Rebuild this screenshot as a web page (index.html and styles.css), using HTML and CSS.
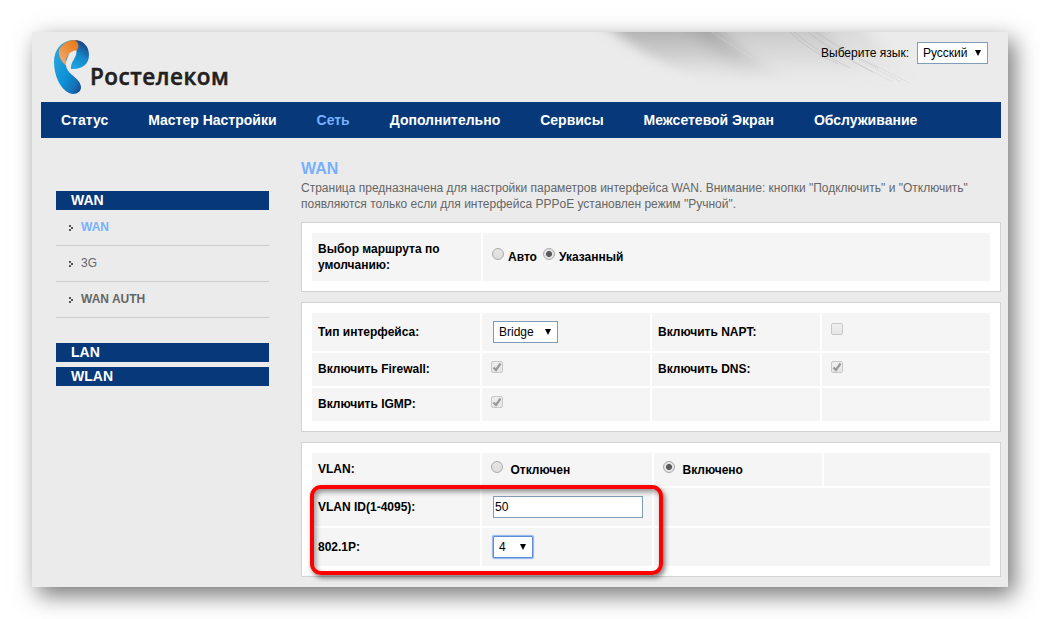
FILE: index.html
```
<!DOCTYPE html>
<html lang="ru">
<head>
    <meta charset="UTF-8">
    <meta name="viewport" content="width=device-width, initial-scale=1.0">
    <title>Ростелеком - WAN</title>
    <link rel="stylesheet" href="styles.css">
</head>
<body>
    <div class="window">
        <header class="header">
            <svg class="swoosh" width="440" height="70" viewBox="0 0 440 70">
                <defs>
                    <linearGradient id="fade" x1="0" y1="0" x2="0" y2="1">
                        <stop offset="0" stop-color="#858585" stop-opacity=".65"/>
                        <stop offset=".5" stop-color="#a0a0a0" stop-opacity=".35"/>
                        <stop offset="1" stop-color="#ebebeb" stop-opacity="0"/>
                    </linearGradient>
                    <filter id="soft" x="-20%" y="-50%" width="140%" height="200%"><feGaussianBlur stdDeviation="9 3"/></filter>
                </defs>
                <g filter="url(#soft)">
                    <path d="M38 -8 Q75 30 160 58 L240 58 Q180 30 145 -8Z" fill="url(#fade)"/>
                    <path d="M120 -8 L180 58 L310 58 L250 -8Z" fill="url(#fade)" opacity=".6"/>
                    <path d="M240 -8 L310 56 L360 60 L290 -8Z" fill="url(#fade)" opacity=".3"/>
                </g>
                <g stroke="#aaa" stroke-width=".6" stroke-opacity=".6" fill="none">
                    <path d="M222 0 Q240 18 270 32M226 0 Q246 18 282 36M240 0 Q262 18 305 40M248 0 Q270 16 310 36"/>
                    <path d="M285 30 L325 50M291 28 L333 50M297 28 L341 51" stroke-dasharray="1 1"/>
                    <path d="M144 0 Q158 10 184 26" stroke="#fff" opacity=".5"/>
                </g>
            </svg>
            <div class="logo">
                <svg width="36" height="56" viewBox="0 0 36 56">
                    <defs>
                        <linearGradient id="blue" x1="0" y1="0" x2="1" y2="1">
                            <stop offset="0" stop-color="#35a9de"/>
                            <stop offset=".55" stop-color="#0d93d8"/>
                            <stop offset=".8" stop-color="#1672b8"/>
                            <stop offset="1" stop-color="#1c3f86"/>
                        </linearGradient>
                        <linearGradient id="cap" x1=".2" y1="1" x2=".6" y2="0">
                            <stop offset="0" stop-color="#1ea6e2"/>
                            <stop offset=".5" stop-color="#1687cb"/>
                            <stop offset="1" stop-color="#1c3f80"/>
                        </linearGradient>
                        <linearGradient id="orange" x1="0" y1="1" x2="1" y2="0">
                            <stop offset="0" stop-color="#f0b27c"/>
                            <stop offset=".6" stop-color="#ec8a35"/>
                            <stop offset="1" stop-color="#e4761c"/>
                        </linearGradient>
                    </defs>
                    <path d="M20 1C7 1.500 0 11 0 23C0 36 6 50 15 54C21 56.500 27 53.500 27 48.500C27 42 20 38 16 34C12.500 30.500 11.500 27 12 23Z" fill="url(#blue)"/>
                    <path d="M20 1C29 1 35 7 35 16C35 25 28 31 17 30C16 23 23 19 22.500 11.500Z" fill="url(#cap)"/>
                    <path d="M5 11C8 5 14 1 21 1C25 4 25.500 8 22.700 11.300C15 12 11 18 12.200 27C7 22 4 17 5 11Z" fill="url(#orange)"/>
                </svg>
                <span class="logo-text">Ростелеком</span>
            </div>
            <div class="language">
                <span class="language-label">Выберите язык:</span>
                <span class="select select-lang">Русский<i class="arrow"></i></span>
            </div>
        </header>

        <nav class="nav">
            <a>Статус</a>
            <a>Мастер Настройки</a>
            <a class="active">Сеть</a>
            <a>Дополнительно</a>
            <a>Сервисы</a>
            <a>Межсетевой Экран</a>
            <a>Обслуживание</a>
        </nav>

        <div class="main">
            <aside class="sidebar">
                <h3>WAN</h3>
                <ul>
                    <li class="active"><svg class="bullet" width="4" height="6"><path d="M0 0h2v2H0zM2 2h2v2H2zM0 4h2v2H0z"/></svg>WAN</li>
                    <li class="plain"><svg class="bullet" width="4" height="6"><path d="M0 0h2v2H0zM2 2h2v2H2zM0 4h2v2H0z"/></svg>3G</li>
                    <li><svg class="bullet" width="4" height="6"><path d="M0 0h2v2H0zM2 2h2v2H2zM0 4h2v2H0z"/></svg>WAN AUTH</li>
                </ul>
                <h3>LAN</h3>
                <h3>WLAN</h3>
            </aside>

            <main class="content">
                <h1>WAN</h1>
                <p class="intro">Страница предназначена для настройки параметров интерфейса WAN. Внимание: кнопки "Подключить" и "Отключить"<br>появляются только если для интерфейса PPPoE установлен режим "Ручной".</p>

                <section class="panel route">
                    <div class="cell label"><span>Выбор маршрута по<br>умолчанию:</span></div>
                    <div class="cell field">
                        <i class="radio"></i><span>Авто</span>
                        <i class="radio checked"></i><span>Указанный</span>
                    </div>
                </section>

                <section class="panel options">
                    <div class="cell label"><span>Тип интерфейса:</span></div>
                    <div class="cell field"><span class="select select-type">Bridge<i class="arrow"></i></span></div>
                    <div class="cell label"><span>Включить NAPT:</span></div>
                    <div class="cell field"><i class="check"></i></div>

                    <div class="cell label short"><span>Включить Firewall:</span></div>
                    <div class="cell field"><i class="check"><svg width="10" height="10"><path d="M1.5 5.5 4 8 8.500 1.500"/></svg></i></div>
                    <div class="cell label short"><span>Включить DNS:</span></div>
                    <div class="cell field"><i class="check"><svg width="10" height="10"><path d="M1.5 5.5 4 8 8.500 1.500"/></svg></i></div>

                    <div class="cell label short"><span>Включить IGMP:</span></div>
                    <div class="cell field"><i class="check"><svg width="10" height="10"><path d="M1.5 5.5 4 8 8.500 1.500"/></svg></i></div>
                    <div class="cell"></div>
                    <div class="cell"></div>
                </section>

                <section class="panel vlan">
                    <div class="cell label short"><span>VLAN:</span></div>
                    <div class="cell field"><i class="radio"></i><span>Отключен</span></div>
                    <div class="cell field"><i class="radio checked"></i><span>Включено</span></div>
                    <div class="cell"></div>

                    <div class="cell label"><span>VLAN ID(1-4095):</span></div>
                    <div class="cell field"><input class="vlan-id" type="text" value="50"></div>
                    <div class="cell wide"></div>

                    <div class="cell label"><span>802.1P:</span></div>
                    <div class="cell field"><span class="select select-prio">4<i class="arrow"></i></span></div>
                    <div class="cell wide"></div>

                    <div class="highlight"></div>
                </section>
            </main>
        </div>
    </div>
</body>
</html>
```
FILE: styles.css
```
* {
    margin: 0;
    padding: 0;
    box-sizing: border-box;
}

body {
    font-family: "Liberation Sans", Arial, sans-serif;
    font-size: 12px;
    line-height: 16px;
    background: #fff;
    color: #000;
    padding: 32px;
    overflow: hidden;
}

.window {
    width: 976px;
    height: 555px;
    background: #ebebeb;
    box-shadow: 6px 8px 22px rgba(0, 0, 0, 0.55);
}

/* header */
.header {
    position: relative;
    display: flex;
    justify-content: space-between;
    height: 70px;
    padding: 7px 20px 0 22px;
}

.swoosh {
    position: absolute;
    top: 0;
    right: 0;
}

.logo {
    display: flex;
}

.logo-text {
    font-family: "Open Sans", sans-serif;
    font-size: 22.5px;
    font-weight: 600;
    letter-spacing: 0.5px;
    line-height: 30px;
    margin-top: 23px;
    color: #231f20;
    -webkit-text-stroke: 0.5px #231f20;
}

.language {
    position: relative;
    display: flex;
    height: 22px;
    margin-top: 3px;
    line-height: 22px;
}

.language-label {
    margin-right: 8px;
}

.select {
    display: flex;
    justify-content: space-between;
    align-items: center;
    height: 22px;
    padding: 0 6px 0 5px;
    background: #fff;
    border: 1px solid #7f9db9;
}

.arrow {
    border: 3.5px solid transparent;
    border-top: 6px solid #000;
    border-bottom: 0;
}

.select-lang {
    width: 71px;
}

.select-type {
    width: 65px;
}

.select-prio {
    width: 40px;
    height: 22px;
    border-color: #5b8bd9;
    border-radius: 1px;
    box-shadow: 0 0 1px 1px #8fb5f0;
}

/* navigation */
.nav {
    display: flex;
    gap: 40px;
    height: 36px;
    margin: 0 7px 0 9px;
    padding-left: 20px;
    background: #06387a;
    color: #fff;
    font-size: 14px;
    font-weight: bold;
    line-height: 36px;
}

.nav .active {
    color: #78b0ff;
}

.main {
    display: flex;
    gap: 32px;
    padding: 0 7px 0 24px;
}

/* sidebar */
.sidebar {
    width: 213px;
    padding-top: 53px;
}

.sidebar h3 {
    height: 19px;
    margin-bottom: 5px;
    padding-left: 15px;
    background: #06387a;
    color: #fff;
    font-size: 14px;
    line-height: 19px;
}

.sidebar ul {
    list-style: none;
    margin: -5px 0 25px;
}

.sidebar li {
    display: flex;
    align-items: center;
    height: 36px;
    padding: 0 0 2px 13px;
    border-bottom: 1px solid #ccc;
    color: #666;
    font-weight: bold;
}

.sidebar li.active {
    color: #78b0ff;
}

.sidebar li.plain {
    font-weight: normal;
}

.bullet {
    margin: 2px 8px 0 0;
    fill: #555;
}

/* content */
.content {
    width: 700px;
    padding-top: 20px;
}

h1 {
    color: #78b0ff;
    font-size: 16px;
    line-height: 22px;
}

.intro {
    margin-bottom: 10px;
    color: #666;
}

.panel {
    position: relative;
    display: grid;
    gap: 2px;
    margin-bottom: 10px;
    padding: 10px;
    background: #fff;
    border: 1px solid #d3d3d3;
}

.route {
    grid-template-columns: 169px 507px;
    grid-template-rows: 48px;
}

.options {
    grid-template-columns: repeat(4, 168px);
    grid-template-rows: 38px 33px 33px;
}

.vlan {
    grid-template-columns: 168px 170px 168px 166px;
    grid-template-rows: 33px 38px 38px;
}

.wide {
    grid-column: span 2;
}

.cell {
    display: flex;
    align-items: center;
    background: #f5f5f5;
}

.label {
    padding-left: 6px;
    font-weight: bold;
}

.label.short {
    padding-bottom: 1px;
}

.field {
    padding-left: 9px;
    font-weight: bold;
}

.select,
.vlan-id {
    font-weight: normal;
}

.field .select,
.vlan-id {
    margin-left: 2px;
}

.vlan-id {
    width: 150px;
    height: 22px;
    padding: 0 1px;
    border: 1px solid #7f9db9;
    font: 12px "Liberation Sans", Arial, sans-serif;
}

.radio {
    flex: none;
    width: 12px;
    height: 12px;
    margin-bottom: 6px;
    border: 1px solid #aaa;
    border-radius: 50%;
    background: linear-gradient(#e6e6e6, #ddd);
}

.radio.checked {
    background: radial-gradient(circle, #5a5a5a 2.6px, #e4e4e4 3.4px);
}

.radio + span {
    margin: 0 6px 0 4px;
}

.vlan .radio {
    margin-bottom: 5px;
}

.vlan .radio + span {
    margin: 1px 0 0 7.5px;
}

.check {
    display: flex;
    width: 12px;
    height: 12px;
    margin-bottom: 6px;
    border: 1px solid #c8c8c8;
    border-radius: 2px;
    background: linear-gradient(#efefef, #e6e6e6);
}

.check path {
    fill: none;
    stroke: #999;
    stroke-width: 2.2;
}

/* red frame around the VLAN ID and priority rows */
.highlight {
    position: absolute;
    left: 8px;
    top: 42px;
    width: 353px;
    height: 90px;
    border: 4px solid #f00;
    border-radius: 11px;
    box-shadow: 2px 3px 5px rgba(0, 0, 0, 0.5), inset 2px 3px 5px rgba(0, 0, 0, 0.4);
}
```
